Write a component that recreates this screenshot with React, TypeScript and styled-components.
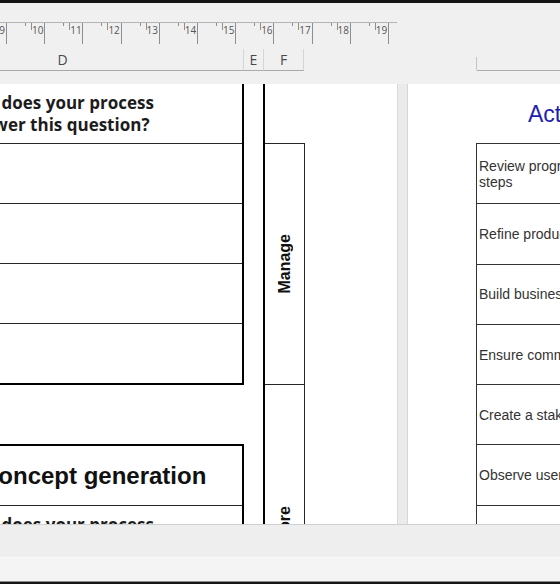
import React from 'react'
import styled, { createGlobalStyle } from 'styled-components'

const rulerUnits = [9, 10, 11, 12, 13, 14, 15, 16, 17, 18, 19]

const activities = [
  'Review progress and next steps',
  'Refine product concept',
  'Build business case',
  'Ensure commercial viability',
  'Create a stakeholder map',
  'Observe users in context',
  'Map the user journey',
]

const App = () => {
  return (
    <>
      <GlobalStyle />
      <Window>
        <TopEdge />
        <Toolbar>
          <RulerTrack>
            {rulerUnits.map((n, i) => (
              <RulerUnit key={n} $first={i === 0}>
                <Tick $h={3} $ml={18} />
                <Tick $h={7} $ml={5} />
                <RulerLabel>{n}</RulerLabel>
              </RulerUnit>
            ))}
          </RulerTrack>
          <HeaderRow>
            <LeftHeaders>
              <ColHeader $w={362} $offset={-118}>D</ColHeader>
              <ColHeader $w={20}>E</ColHeader>
              <ColHeader $w={40}>F</ColHeader>
            </LeftHeaders>
            <RightHeader />
          </HeaderRow>
        </Toolbar>

        <Content>
          <LeftPage>
            <Sheet>
              <SheetTable>
                <SheetRow>
                  <QuestionText>
                    How does your process
                    <br />
                    answer this question?
                  </QuestionText>
                </SheetRow>
                <SheetRow />
                <SheetRow />
                <SheetRow />
                <SheetRow />
              </SheetTable>
              <SheetGap />
              <SheetTable $top>
                <SheetRow $align="start">
                  <SectionTitle>Concept generation</SectionTitle>
                </SheetRow>
                <SheetRow>
                  <QuestionText>
                    How does your process
                    <br />
                    answer this question?
                  </QuestionText>
                </SheetRow>
              </SheetTable>
            </Sheet>

            <SideColumn>
              <SideSpacer />
              <PhaseBox $h={241}>
                <PhaseLabel>Manage</PhaseLabel>
              </PhaseBox>
              <PhaseBox $h={302}>
                <PhaseLabel>Explore</PhaseLabel>
              </PhaseBox>
            </SideColumn>
          </LeftPage>

          <PaneDivider />

          <RightPage>
            <ActivitiesHeading>Activities</ActivitiesHeading>
            <ActivityTable>
              {activities.map((a) => (
                <ActivityCell key={a}>{a}</ActivityCell>
              ))}
            </ActivityTable>
          </RightPage>
        </Content>

        <StatusArea>
          <StatusBand $h={32} $bg="#eeeeee" />
          <StatusBand $h={24} $bg="#f4f4f4" $line="#fafafa" />
        </StatusArea>
        <BottomEdge />
      </Window>
    </>
  )
}

const GlobalStyle = createGlobalStyle`
  html, body {
    margin: 0;
    padding: 0;
    background: #f0f0f0;
    overflow: hidden;
  }
`

const Window = styled.div`
  width: 560px;
  height: 584px;
  display: flex;
  flex-direction: column;
  overflow: hidden;
  background: #f0f0f0;
  font-family: 'Liberation Sans', Arial, sans-serif;
`

const TopEdge = styled.div`
  flex: none;
  height: 3px;
  background: #141414;
`

const BottomEdge = styled.div`
  flex: none;
  height: 2px;
  background: #141414;
  border-top: 1px solid #8c8c8c;
`

const Toolbar = styled.div`
  flex: none;
  height: 81px;
  padding-top: 19px;
  box-sizing: border-box;
  display: flex;
  flex-direction: column;
`

const RulerTrack = styled.div`
  width: 397px;
  height: 22px;
  box-sizing: border-box;
  border-top: 1px solid #b4b4b4;
  display: flex;
  overflow: hidden;
`

const RulerUnit = styled.div<{ $first?: boolean }>`
  flex: none;
  width: 38.2px;
  height: 21px;
  box-sizing: border-box;
  margin-left: ${(p) => (p.$first ? '-31.2px' : '0')};
  border-right: 1px solid #8e8e8e;
  display: flex;
  align-items: flex-start;
`

const Tick = styled.span<{ $h: number; $ml: number }>`
  flex: none;
  width: 1px;
  height: ${(p) => p.$h}px;
  margin-left: ${(p) => p.$ml}px;
  background: #8e8e8e;
`

const RulerLabel = styled.span`
  margin-left: auto;
  padding-right: 1px;
  font-family: 'Open Sans', sans-serif;
  font-size: 10px;
  line-height: 12px;
  margin-top: 1px;
  color: #555;
`

const HeaderRow = styled.div`
  margin-top: 5px;
  height: 22px;
  display: flex;
  align-items: flex-end;
`

const LeftHeaders = styled.div`
  flex: none;
  width: 397px;
  height: 22px;
  display: flex;
  overflow: hidden;
`

const ColHeader = styled.div<{ $w: number; $offset?: number }>`
  flex: none;
  width: ${(p) => p.$w}px;
  margin-left: ${(p) => p.$offset ?? 0}px;
  height: 22px;
  box-sizing: border-box;
  border-right: 1px solid #d5d5d5;
  border-bottom: 1px solid #a9a9a9;
  display: flex;
  align-items: center;
  justify-content: center;
  font-family: 'Open Sans', sans-serif;
  font-size: 14px;
  color: #4a4a4a;
`

const RightHeader = styled.div`
  flex: none;
  margin-left: 79px;
  width: 100px;
  height: 14px;
  box-sizing: border-box;
  border-left: 1px solid #c4c4c4;
  border-bottom: 1px solid #acacac;
  border-bottom-left-radius: 2px;
`

const Content = styled.div`
  flex: none;
  height: 440px;
  display: flex;
`

const LeftPage = styled.div`
  flex: none;
  width: 397px;
  background: #fff;
  overflow: hidden;
  display: flex;
  align-items: flex-start;
`

const Sheet = styled.div`
  flex: none;
  width: 373px;
  margin-left: -129px;
  display: flex;
  flex-direction: column;
`

const SheetTable = styled.div<{ $top?: boolean }>`
  border-right: 2px solid #000;
  border-top: ${(p) => (p.$top ? '2px solid #000' : 'none')};
  border-bottom: 2px solid #000;
`

const SheetRow = styled.div<{ $align?: 'start' | 'center' }>`
  height: 60px;
  box-sizing: border-box;
  border-bottom: 1px solid #262626;
  display: flex;
  align-items: center;
  justify-content: ${(p) => (p.$align === 'start' ? 'flex-start' : 'center')};

  &:last-child {
    height: 59px;
    border-bottom: none;
  }
`

const SheetGap = styled.div`
  height: 59px;
`

const QuestionText = styled.div`
  font-family: 'Open Sans', sans-serif;
  font-weight: 700;
  font-size: 17px;
  line-height: 22px;
  text-align: center;
  color: #1c1c1c;
  white-space: nowrap;
`

const SectionTitle = styled.div`
  padding-left: 110px;
  font-size: 24px;
  font-weight: 700;
  color: #111;
  white-space: nowrap;
`

const SideColumn = styled.div`
  flex: none;
  width: 42px;
  margin-left: 19px;
  box-sizing: border-box;
  border-left: 2px solid #000;
  align-self: stretch;
  display: flex;
  flex-direction: column;
`

const SideSpacer = styled.div`
  flex: none;
  height: 59px;
`

const PhaseBox = styled.div<{ $h: number }>`
  flex: none;
  height: ${(p) => p.$h}px;
  box-sizing: border-box;
  border-top: 1px solid #262626;
  border-right: 1px solid #262626;
  display: flex;
  align-items: center;
  justify-content: center;
`

const PhaseLabel = styled.span`
  writing-mode: vertical-rl;
  transform: rotate(180deg);
  font-size: 16px;
  font-weight: 700;
  color: #111;
  white-space: nowrap;
`

const PaneDivider = styled.div`
  flex: none;
  width: 11px;
  box-sizing: border-box;
  background: #ebebeb;
  border-left: 1px solid #dadada;
  border-right: 1px solid #d6d6d6;
`

const RightPage = styled.div`
  flex: 1;
  background: #fff;
  overflow: hidden;
`

const ActivitiesHeading = styled.div`
  margin: 16px 0 15px 120px;
  font-size: 23px;
  line-height: 28px;
  color: #1f1fae;
  white-space: nowrap;
`

const ActivityTable = styled.div`
  margin-left: 68px;
  width: 190px;
`

const ActivityCell = styled.div`
  height: 60.3px;
  box-sizing: border-box;
  border-top: 1px solid #333;
  border-left: 1px solid #333;
  border-right: 1px solid #333;
  padding: 0 4px 0 2px;
  display: flex;
  align-items: center;
  font-size: 14px;
  line-height: 16px;
  color: #333;
`

const StatusArea = styled.div`
  flex: none;
  border-top: 1px solid #d0d0d0;
  display: flex;
  flex-direction: column;
`

const StatusBand = styled.div<{ $h: number; $bg: string; $line?: string }>`
  height: ${(p) => p.$h}px;
  box-sizing: border-box;
  background: ${(p) => p.$bg};
  border-top: ${(p) => (p.$line ? `1px solid ${p.$line}` : 'none')};
`

export default App
